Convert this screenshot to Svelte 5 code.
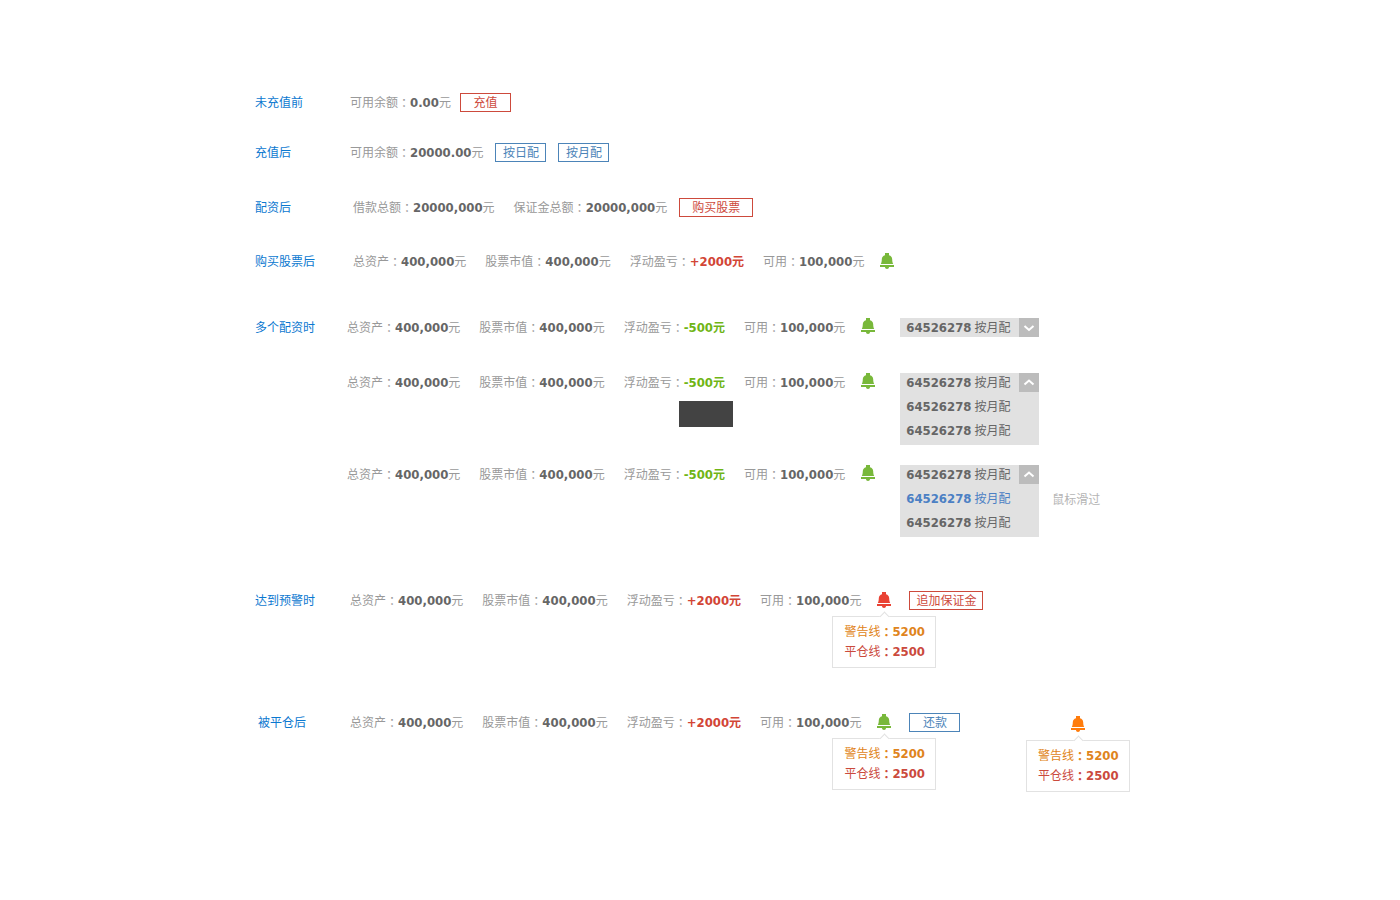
<script>
  const asset = { label: '总资产', value: '400,000' };
  const market = { label: '股票市值', value: '400,000' };
  const gain = { label: '浮动盈亏', value: '+2000', tone: 'up' };
  const loss = { label: '浮动盈亏', value: '-500', tone: 'down' };
  const free = { label: '可用', value: '100,000' };
  const accounts = [
    { id: '64526278', plan: '按月配' },
    { id: '64526278', plan: '按月配' },
    { id: '64526278', plan: '按月配' }
  ];
</script>

{#snippet stat(item)}
  <span class="stat {item.tone ?? ''}">
    {item.label}<span class="colon">：</span><b>{item.value}</b><span class="unit">元</span>
    {#if item.tip}<span class="tip" role="tooltip"></span>{/if}
  </span>
{/snippet}

{#snippet bell(tone, pop)}
  <span class="bell {tone}">
    <svg width="14" height="16" viewBox="0 0 14 16" role="img" aria-label="预警">
      <path d="M5 0h4v2.200c2 .6 3.100 2 3.200 4 .1 2 .2 3.300 1 4.800H.8c.8-1.500.9-2.800 1-4.800.1-2 1.200-3.400 3.200-4z" />
      <path d="M0 12h14v2H0z" />
      <path d="M5 14h4c0 1.300-.8 2-2 2s-2-.7-2-2z" />
    </svg>
    {#if pop}
      <span class="pop">
        <span class="warn">警告线<span class="colon">：</span><b>5200</b></span>
        <span class="close">平仓线<span class="colon">：</span><b>2500</b></span>
      </span>
    {/if}
  </span>
{/snippet}

{#snippet chevron(up)}
  <span class="arrow">
    <svg width="20" height="19" viewBox="0 0 20 19" aria-hidden="true">
      <path d={up ? 'M5.500 11.500l4.500-4 4.500 4' : 'M5.500 8l4.500 4 4.500-4'} />
    </svg>
  </span>
{/snippet}

{#snippet openList(active)}
  <div class="drop">
    <button class="current" type="button" aria-expanded="true">
      <b>{accounts[0].id}</b><span>{accounts[0].plan}</span>
      {@render chevron(true)}
    </button>
    {#each accounts.slice(1) as account, i}
      <button class="option" class:active={i === active} type="button">
        <b>{account.id}</b><span>{account.plan}</span>
      </button>
    {/each}
  </div>
{/snippet}

<main>
  <section class="s1">
    <h2>未充值前</h2>
    <div class="row">
      {@render stat({ label: '可用余额', value: '0.00' })}
      <button class="btn red near" type="button">充值</button>
    </div>
  </section>

  <section class="s2">
    <h2>充值后</h2>
    <div class="row">
      {@render stat({ label: '可用余额', value: '20000.00' })}
      <button class="btn blue" type="button">按日配</button>
      <button class="btn blue" type="button">按月配</button>
    </div>
  </section>

  <section class="s3 wide">
    <h2>配资后</h2>
    <div class="row">
      {@render stat({ label: '借款总额', value: '20000,000' })}
      {@render stat({ label: '保证金总额', value: '20000,000' })}
      <button class="btn red long" type="button">购买股票</button>
    </div>
  </section>

  <section class="s4 wide">
    <h2>购买股票后</h2>
    <div class="row">
      {#each [asset, market, gain, free] as item}{@render stat(item)}{/each}
      {@render bell('green', false)}
    </div>
  </section>

  <section class="s5 narrow">
    <h2>多个配资时</h2>
    <div class="stack">
      <div class="row">
        {#each [asset, market, loss, free] as item}{@render stat(item)}{/each}
        {@render bell('green', false)}
        <div class="drop">
          <div class="current">
            <b>{accounts[0].id}</b><span>{accounts[0].plan}</span>
            {@render chevron(false)}
            <select aria-label="配资账户">
              {#each accounts as account}<option>{account.id} {account.plan}</option>{/each}
            </select>
          </div>
        </div>
      </div>
      <div class="row">
        {#each [asset, market, { ...loss, tip: true }, free] as item}{@render stat(item)}{/each}
        {@render bell('green', false)}
        {@render openList(-1)}
      </div>
      <div class="row">
        {#each [asset, market, loss, free] as item}{@render stat(item)}{/each}
        {@render bell('green', false)}
        {@render openList(0)}
        <span class="note">鼠标滑过</span>
      </div>
    </div>
  </section>

  <section class="s6">
    <h2>达到预警时</h2>
    <div class="row">
      {#each [asset, market, gain, free] as item}{@render stat(item)}{/each}
      {@render bell('red', true)}
      <button class="btn red long after" type="button">追加保证金</button>
    </div>
  </section>

  <section class="s7">
    <h2>被平仓后</h2>
    <div class="row">
      {#each [asset, market, gain, free] as item}{@render stat(item)}{/each}
      {@render bell('green', true)}
      <button class="btn blue after" type="button">还款</button>
      <div class="aside">{@render bell('orange', true)}</div>
    </div>
  </section>
</main>

<style>
  :global(body) {
    background: #fff;
  }

  main {
    box-sizing: border-box;
    max-width: 890px;
    margin: 0 auto;
    padding: 93px 0;
    font: 12px/17px 'Noto Sans CJK SC', sans-serif;
    color: #999;
    white-space: nowrap;
  }

  section {
    display: grid;
    grid-template-columns: 95px 1fr;
  }
  .wide {
    grid-template-columns: 98px 1fr;
  }
  .narrow {
    grid-template-columns: 92px 1fr;
  }
  .s2 { margin-top: 31px; }
  .s3 { margin-top: 36px; }
  .s4 { margin-top: 35px; }
  .s5 { margin-top: 47px; }
  .s6 { margin-top: 54px; }
  .s7 { margin-top: 103px; }
  .s7 h2 { padding-left: 3px; }

  h2 {
    margin: 0;
    font-size: 12px;
    font-weight: 400;
    color: #0b78d0;
  }

  .row {
    display: flex;
    align-items: flex-start;
  }
  .stack .row + .row {
    margin-top: 36px;
  }
  .stack .row:last-child {
    margin-top: 20px;
  }

  .stat {
    position: relative;
    display: flex;
    height: 19px;
  }
  .stat + .stat {
    margin-left: 19px;
  }
  b {
    font: 700 13px/19px 'DejaVu Sans Condensed', sans-serif;
  }
  .stat b {
    color: #666;
  }
  .colon {
    font-family: 'Noto Sans CJK TC', sans-serif;
    line-height: 19px;
  }
  .stat.up b,
  .up .unit {
    color: #d24536;
  }
  .stat.down b,
  .down .unit {
    color: #70b516;
  }
  .up .unit,
  .down .unit {
    font-weight: 700;
  }

  .tip {
    position: absolute;
    top: 28px;
    left: 55px;
    width: 54px;
    height: 26px;
    background: #434343;
  }

  button {
    font: inherit;
    cursor: pointer;
  }
  .btn {
    box-sizing: border-box;
    width: 51px;
    height: 19px;
    margin-left: 12px;
    padding: 0 0 2px;
    border: 1px solid;
    background: #fff;
    line-height: 15px;
    text-align: center;
  }
  .near {
    margin-left: 9px;
  }
  .after {
    margin-left: 18px;
  }
  .long {
    width: 74px;
  }
  .btn.red {
    color: #cd4a3c;
  }
  .btn.blue {
    color: #4c84b8;
  }

  .bell {
    position: relative;
    display: block;
    width: 14px;
    height: 16px;
    margin: 1px 0 0 16px;
  }
  .stack .bell {
    margin-top: 0;
  }
  .bell svg {
    display: block;
    fill: currentColor;
  }
  .bell.green { color: #78b83a; }
  .bell.red { color: #e94234; }
  .bell.orange { color: #ff7c0c; }

  .pop {
    position: absolute;
    top: 24px;
    left: 50%;
    box-sizing: border-box;
    width: 104px;
    padding: 5px 0 5px 11px;
    border: 1px solid #e2e2e2;
    background: #fff;
    transform: translateX(-50%);
  }
  .pop::before {
    content: '';
    position: absolute;
    top: -4px;
    left: 48px;
    width: 6px;
    height: 6px;
    border: solid #e2e2e2;
    border-width: 1px 0 0 1px;
    background: #fff;
    transform: rotate(45deg);
  }
  .pop > span {
    display: flex;
    height: 20px;
  }
  .pop .colon {
    font-weight: 700;
  }
  .warn { color: #df8420; }
  .close { color: #cb4a3d; }

  .drop {
    width: 139px;
    margin-left: 25px;
    background: #e1e1e1;
    color: #666;
  }
  .current,
  .option {
    position: relative;
    display: flex;
    gap: 3px;
    box-sizing: border-box;
    width: 100%;
    height: 19px;
    padding: 0 6px;
    border: 0;
    background: none;
    color: inherit;
    text-align: left;
  }
  .option {
    height: 24px;
    padding-top: 5px;
  }
  .option:last-child {
    height: 29px;
  }
  .option.active {
    color: #4c80c4;
  }
  .arrow {
    position: absolute;
    top: 0;
    right: 0;
    width: 20px;
    height: 19px;
    background: #bcbcbc;
  }
  .arrow svg {
    display: block;
    fill: none;
    stroke: #fff;
    stroke-width: 2;
  }
  select {
    position: absolute;
    inset: 0;
    width: 100%;
    opacity: 0;
    cursor: pointer;
  }

  .note {
    margin: 25px 0 0 13px;
    color: #b5b5b5;
  }

  .aside {
    margin: 2px 60px 0 auto;
  }
</style>
